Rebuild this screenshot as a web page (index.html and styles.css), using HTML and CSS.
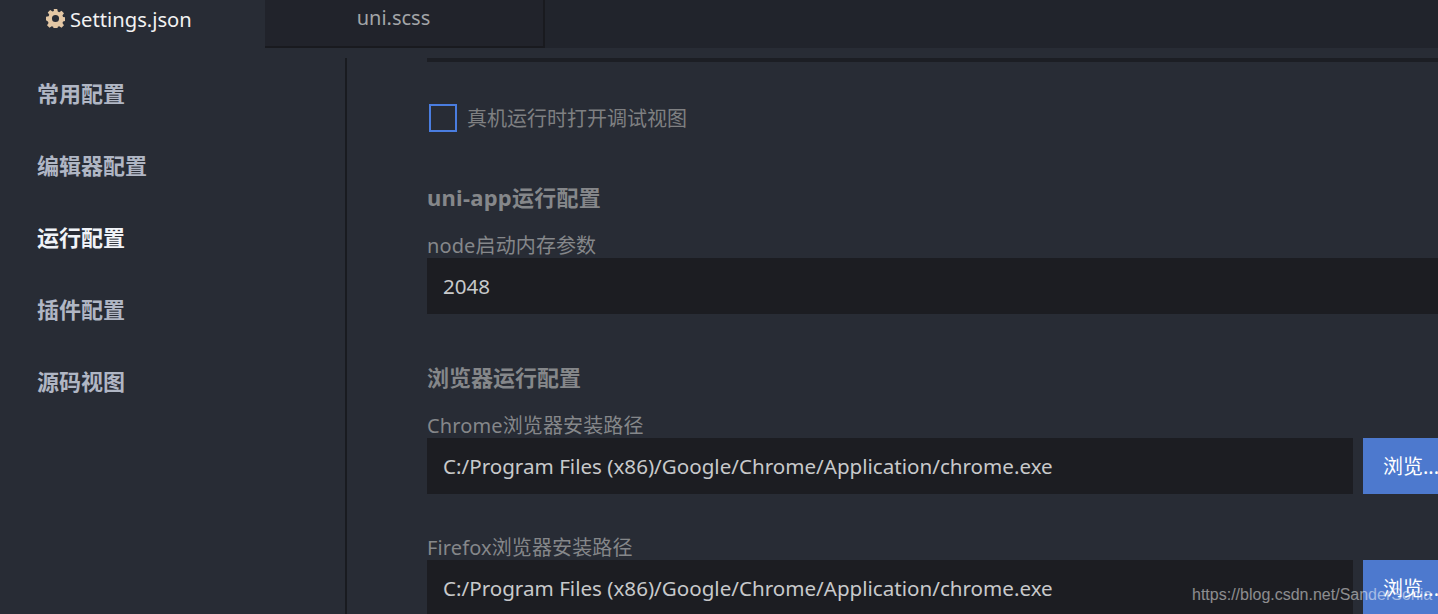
FILE: index.html
```html
<!DOCTYPE html>
<html lang="zh-CN">
<head>
<meta charset="utf-8">
<title>Settings.json</title>
<link rel="stylesheet" href="styles.css">
</head>
<body>
<div class="tabs">
  <div class="tab tab-active">
    <svg class="gear" viewBox="0 0 24 24" width="19" height="19"><path fill="#e3c7a4" fill-rule="evenodd" d="M9.800 0h4.400l.7 3.300 1.800.8 2.900-1.900 3.100 3.100-1.900 2.900.8 1.800 3.300.7v4.400l-3.300.7-.8 1.800 1.900 2.900-3.100 3.100-2.900-1.900-1.800.8-.7 3.300H9.800l-.7-3.300-1.800-.8-2.900 1.900-3.100-3.100 1.900-2.900-.8-1.800L0 14.200V9.800l3.300-.7.8-1.800-1.900-2.900 3.100-3.100 2.900 1.900 1.800-.8zM12 7.500a4.500 4.500 0 1 0 0 9 4.500 4.500 0 0 0 0-9z"/></svg>
    <span>Settings.json</span>
  </div>
  <div class="tab tab-idle">uni.scss</div>
</div>
<div class="layout">
  <nav class="side">
    <div class="side-item">常用配置</div>
    <div class="side-item">编辑器配置</div>
    <div class="side-item side-current">运行配置</div>
    <div class="side-item">插件配置</div>
    <div class="side-item">源码视图</div>
  </nav>
  <main class="main">
    <div class="rule"></div>
    <label class="check"><span class="box"></span><span class="check-text">真机运行时打开调试视图</span></label>
    <h2 class="head head-uni">uni-app运行配置</h2>
    <div class="label">node启动内存参数</div>
    <div class="input">2048</div>
    <h2 class="head head-browser">浏览器运行配置</h2>
    <div class="label">Chrome浏览器安装路径</div>
    <div class="path-row">
      <div class="input path">C:/Program Files (x86)/Google/Chrome/Application/chrome.exe</div>
      <div class="btn">浏览...</div>
    </div>
    <div class="label label-ff">Firefox浏览器安装路径</div>
    <div class="path-row">
      <div class="input path">C:/Program Files (x86)/Google/Chrome/Application/chrome.exe</div>
      <div class="btn">浏览...</div>
    </div>
  </main>
</div>
<div class="watermark">https://blog.csdn.net/SanderSonia</div>
</body>
</html>
```
FILE: styles.css
```css
html, body {
  margin: 0;
  height: 614px;
  overflow: hidden;
  background: #282c35;
}
body {
  font-family: "Noto Sans", "Noto Sans CJK SC", sans-serif;
  font-size: 20px;
  position: relative;
}
.tabs {
  display: flex;
  height: 48px;
  background: #21242c;
}
.tab {
  box-sizing: border-box;
  height: 48px;
  display: flex;
  align-items: center;
  padding-bottom: 10px;
}
.tab-active {
  width: 265px;
  background: #282c35;
  color: #f2f2f2;
  padding-left: 46px;
  gap: 5px;
  font-size: 20.2px;
}
.gear {
  flex: none;
  margin-bottom: 2px;
}
.tab-idle {
  width: 280px;
  background: #21232b;
  border-right: 2px solid #191a1f;
  border-bottom: 2px solid #191a1f;
  color: #a3a5a8;
  justify-content: center;
  padding-bottom: 12px;
  padding-right: 21px;
}
.layout {
  display: flex;
  margin-top: 10px;
}
.side {
  box-sizing: border-box;
  width: 347px;
  height: 556px;
  border-right: 2px solid #191b20;
  padding-left: 37px;
  flex: none;
}
.side-item {
  height: 72px;
  line-height: 72px;
  margin-top: -1px;
  margin-bottom: 1px;
  font-size: 22px;
  font-weight: 700;
  color: #b0b6c4;
}
.side-current { color: #f0f3f8; }
.main {
  flex: 1;
  min-width: 0;
  padding-left: 80px;
}
.rule {
  height: 4px;
  background: #1c1e24;
}
.check {
  display: flex;
  align-items: flex-start;
  gap: 10px;
  height: 28px;
  margin: 42px 0 0 2px;
  color: #7f8082;
}
.check-text { line-height: 29px; }
.box {
  box-sizing: border-box;
  width: 28px;
  height: 28px;
  border: 2px solid #4a7de0;
}
.head {
  margin: 0;
  font-size: 22px;
  font-weight: 700;
  color: #85878a;
  line-height: 30px;
}
.head-uni { margin-top: 50px; letter-spacing: 0.25px; }
.head-browser { margin-top: 48px; }
.label {
  color: #85878a;
  line-height: 25px;
  margin-top: 21px;
  height: 25px;
  letter-spacing: 0.12px;
}
.input {
  box-sizing: border-box;
  height: 56px;
  line-height: 57px;
  padding-left: 16px;
  background: #1c1d22;
  color: #c8c9cb;
  font-size: 20.6px;
}
.path-row {
  display: flex;
  gap: 10px;
}
.path {
  width: 926px;
  flex: none;
}
.btn {
  width: 100px;
  flex: none;
  height: 56px;
  line-height: 57px;
  padding-left: 20px;
  background: #4d79ce;
  color: #fff;
  white-space: nowrap;
}
.label-ff { margin-top: 41px; }
.watermark {
  position: absolute;
  left: 1192px;
  top: 585px;
  font-family: "Liberation Sans", sans-serif;
  font-size: 16px;
  line-height: 20px;
  color: rgba(255, 255, 255, 0.5);
  white-space: nowrap;
}
```
